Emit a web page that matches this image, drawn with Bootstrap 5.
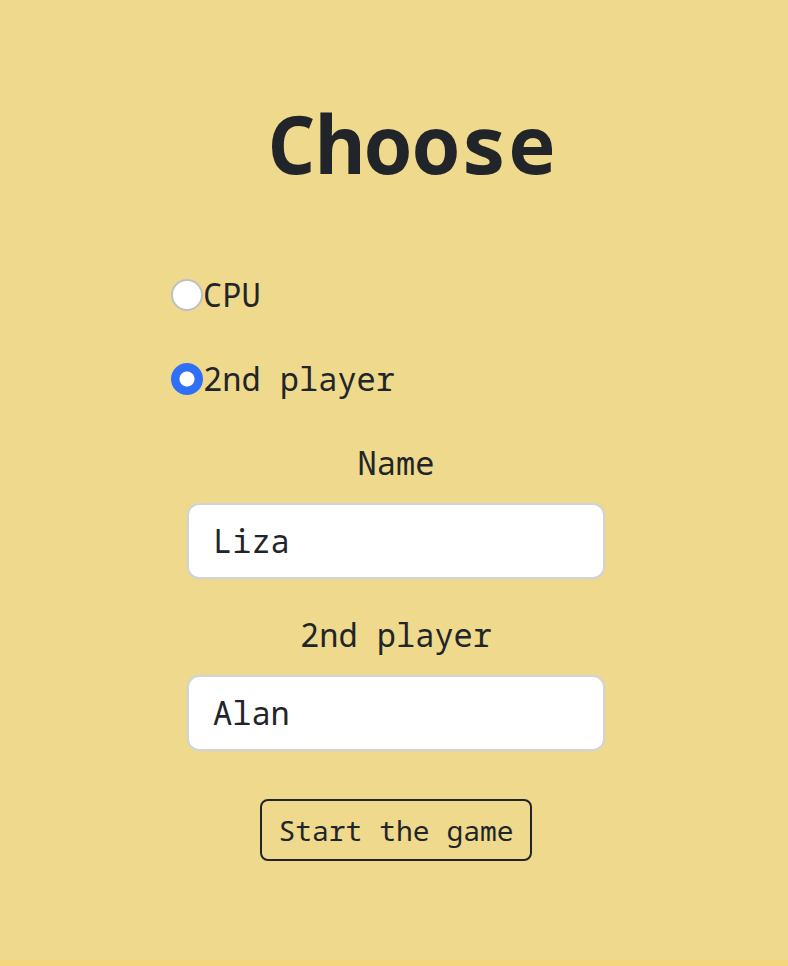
<!DOCTYPE html>
<html lang="en">
<head>
<meta charset="utf-8">
<meta name="viewport" content="width=device-width, initial-scale=1">
<title>Choose</title>
<link href="https://cdn.jsdelivr.net/npm/bootstrap@5.3.0/dist/css/bootstrap.min.css" rel="stylesheet">
<style>
  body {
    background: #f3d67e;
    color: #212529;
    font-family: "Noto Sans Mono", "DejaVu Sans Mono", monospace;
    font-size: 32px;
    line-height: 48px;
  }
  .setup-screen { background: #eed98c; padding: 95px 0 48px 4px; }
  .setup-title { font-size: 80px; line-height: 96px; padding-left: 32px; margin-bottom: 80px; }
  .setup-form { max-width: 450px; }
  .choice-row { margin-bottom: 36px; }
  .choice-row .form-check-input {
    width: 32px;
    height: 32px;
    border: 2px solid #bfbfbf;
    background-color: #fff;
  }
  .choice-row .form-check-input:checked {
    border-color: #306ff6;
    background-color: #306ff6;
    background-image: radial-gradient(circle, #fff 7px, #306ff6 8px);
  }
  .name-field { margin-bottom: 32px; }
  .name-field .form-label { margin-bottom: 16px; }
  .name-field .form-control {
    font-size: 32px;
    line-height: 48px;
    padding: 12px 24px;
    border: 2px solid #ced4da;
    border-radius: 12px;
    color: #212529;
    background: #fff;
  }
  .start-btn {
    margin-top: 16px;
    padding: 8px 16px;
    font-size: 28px;
    line-height: 42px;
    border-width: 2px;
    border-radius: 8px;
  }
  .page-edge { height: 6px; }
</style>
</head>
<body class="d-flex flex-column min-vh-100">
<main class="setup-screen flex-grow-1">
  <h1 class="setup-title fw-bold text-center">Choose</h1>
  <form class="setup-form mx-auto">
    <div class="choice-row d-flex align-items-center">
      <input class="form-check-input m-0 flex-shrink-0" type="radio" name="opponent" id="cpu">
      <label for="cpu">CPU</label>
    </div>
    <div class="choice-row d-flex align-items-center">
      <input class="form-check-input m-0 flex-shrink-0" type="radio" name="opponent" id="second" checked>
      <label for="second">2nd player</label>
    </div>
    <div class="px-3 text-center">
      <div class="name-field">
        <label class="form-label d-block" for="name1">Name</label>
        <input class="form-control" type="text" id="name1" value="Liza">
      </div>
      <div class="name-field">
        <label class="form-label d-block" for="name2">2nd player</label>
        <input class="form-control" type="text" id="name2" value="Alan">
      </div>
      <button class="start-btn btn btn-outline-dark" type="button">Start the game</button>
    </div>
  </form>
</main>
<div class="page-edge"></div>
<script src="https://cdn.jsdelivr.net/npm/bootstrap@5.3.0/dist/js/bootstrap.bundle.min.js"></script>
</body>
</html>
